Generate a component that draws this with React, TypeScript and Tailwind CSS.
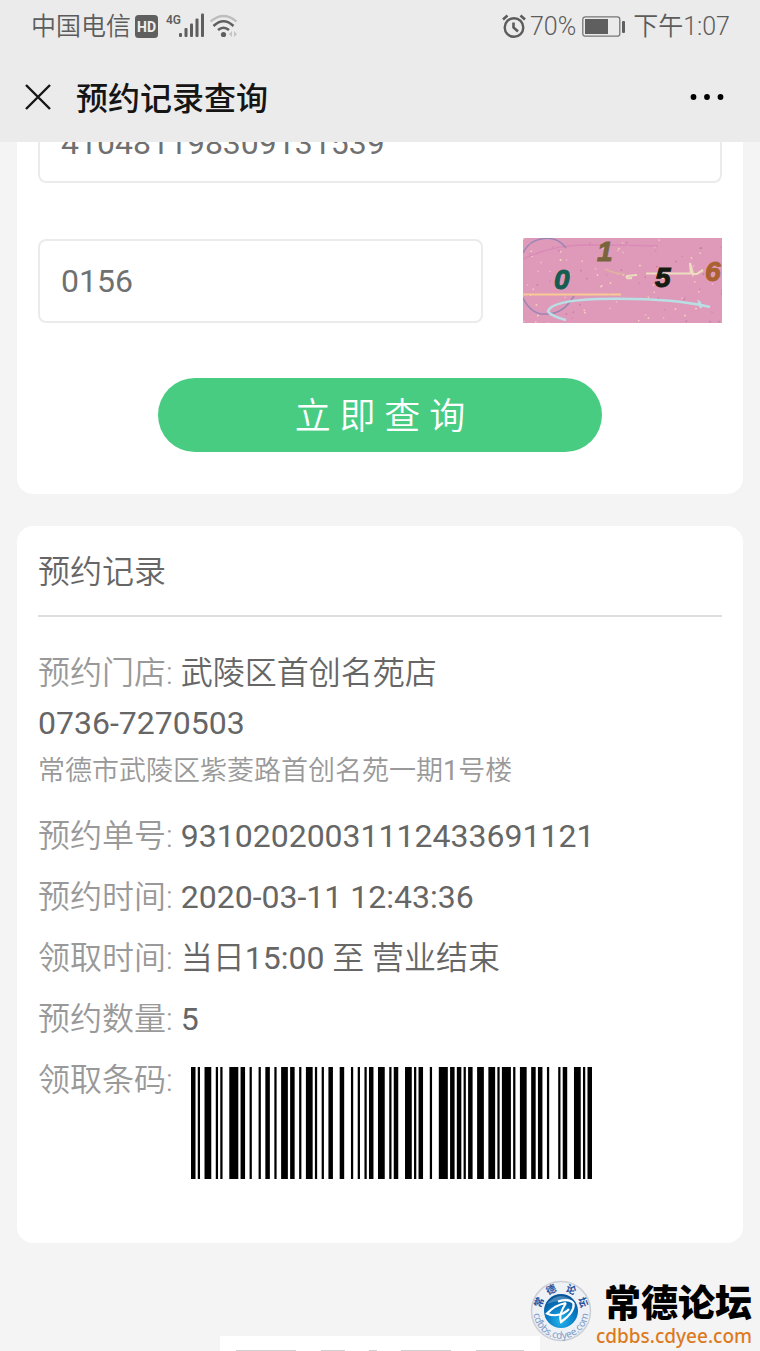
import { useState } from 'react';

const sans = "font-[Roboto,'Noto_Sans_CJK_SC',sans-serif]";

/* Code 128 element widths: start C, 93 10 20 20 03 11 12 43 36 91 12, code A, "1", check, stop */
const BARCODE = [
  '211232', '111341', '221312', '221231', '221231', '121223', '231212', '112232', '112331',
  '112313', '412121', '112232', '311141', '123221', '221411', '2331112',
].join('');

function Barcode({ label }: { label: string }) {
  let x = 0;
  const bars: { x: number; w: number }[] = [];
  BARCODE.split('').forEach((c, i) => {
    const w = Number(c);
    if (i % 2 === 0) bars.push({ x, w });
    x += w;
  });
  return (
    <svg role="img" aria-label={label} viewBox={`0 0 ${x} 50`} preserveAspectRatio="none" className="h-28 w-[401px] text-black">
      {bars.map((b) => (
        <rect key={b.x} x={b.x} y="0" width={b.w} height="50" fill="currentColor" />
      ))}
    </svg>
  );
}

function StatusBar() {
  return (
    <div className="flex h-[52px] items-center justify-between pr-[30px] pl-[31px] text-[25px] leading-none font-[350] text-[#5c5c5c]">
      <div className="flex items-center">
        <span>中国电信</span>
        <svg viewBox="0 0 23 23" className="ml-1 size-[23px]">
          <rect width="23" height="23" rx="3.5" fill="#5f5f5f" />
          <text x="11.5" y="16.5" textAnchor="middle" fontFamily="Roboto, sans-serif" fontWeight="700" fontSize="14" fill="#efefef">HD</text>
        </svg>
        <svg viewBox="0 0 40 26" className="ml-2 h-[26px] w-10" fill="#5f5f5f">
          <text x="0" y="11" fontFamily="Roboto, sans-serif" fontWeight="600" fontSize="12">4G</text>
          <rect x="13" y="20" width="3" height="4" rx="1" />
          <rect x="18.500" y="15" width="3" height="9" rx="1" />
          <rect x="24" y="10.500" width="3" height="13.500" rx="1" />
          <rect x="29.500" y="5.500" width="3" height="18.500" rx="1" />
          <rect x="35" y="0.500" width="3" height="23.500" rx="1" />
        </svg>
        <svg viewBox="0 0 28 24" className="ml-1 h-6 w-7" fill="none" strokeWidth="2.600">
          <path d="M0.500 7.500Q13.500-3.500 26.500 7.500" stroke="#bdbdbd" strokeWidth="2.200" />
          <path d="M3.500 12Q13.500 2.500 23.500 12" stroke="#5f5f5f" />
          <path d="M8 16Q13.500 11.500 19 16" stroke="#5f5f5f" />
          <circle cx="13.500" cy="20.500" r="2.600" fill="#5f5f5f" />
          <path d="M22 17v6l-3-3zM24 17v6l3-3z" fill="#c4c4c4" />
        </svg>
      </div>
      <div className="flex items-center">
        <svg viewBox="0 0 24 24" className="size-6" fill="none" stroke="#5c5c5c" strokeWidth="2.400">
          <circle cx="12" cy="13.500" r="9.300" />
          <path d="M11.500 8.500V13.500l4.500 4M1 5.500 5.500 1.500M23 5.500 18.500 1.500" strokeWidth="2.600" />
        </svg>
        <span className="ml-1">70%</span>
        <svg viewBox="0 0 44 21" className="ml-[6px] h-[21px] w-11">
          <rect x="0.800" y="0.800" width="37" height="19.400" rx="2.500" fill="none" stroke="#777" strokeWidth="1.300" />
          <rect x="3" y="3" width="23" height="15" fill="#5f5f5f" />
          <rect x="40" y="5" width="3" height="12" rx="1" fill="#5f5f5f" />
        </svg>
        <span className="ml-[7px]">下午1:07</span>
      </div>
    </div>
  );
}

function TitleBar() {
  return (
    <div className="flex h-[90px] items-center pt-1 pr-9 pl-6 text-[#151515]">
      <button type="button" aria-label="关闭" className="-mt-1">
        <svg viewBox="0 0 28 28" className="size-7" stroke="currentColor" strokeWidth="2.400">
          <path d="M2 2 26 26M26 2 2 26" />
        </svg>
      </button>
      <h1 className="ml-6 grow text-[32px] leading-[48px] font-medium">预约记录查询</h1>
      <button type="button" aria-label="更多" className="-mt-1">
        <svg viewBox="0 0 34 6" className="h-[6px] w-[34px]" fill="#000">
          <circle cx="3.500" cy="3" r="2.900" />
          <circle cx="17" cy="3" r="2.900" />
          <circle cx="30.500" cy="3" r="2.900" />
        </svg>
      </button>
    </div>
  );
}

const SPECKS = Array.from({ length: 120 }, (_, i) => ({
  x: (i * 73.7 + (i * i * 13) % 41) % 199,
  y: (i * 37.3 + (i * i * 7) % 29) % 85,
  c: ['#f3c9c4', '#f7dcb8', '#d08bad', '#c17fa3', '#f4b9cf'][i % 5],
}));

function Captcha() {
  return (
    <svg viewBox="0 0 199 85" className="h-[85px] w-[199px]" role="img" aria-label="验证码" fill="none">
      <rect width="199" height="85" fill="#df9aba" />
      {SPECKS.map((s, i) => (
        <rect key={i} x={s.x} y={s.y} width="1.500" height="1.500" fill={s.c} />
      ))}
      <path d="M0 21Q30 7 60 7T135 8" stroke="#d98ab6" strokeWidth="1.500" />
      <path d="M0 15C8-2 32-5 43 10M0 60C6 72 14 77 24 76C36 76 45 68 51 58" stroke="#9a86b4" strokeWidth="1.500" />
      <path d="M0 56.500H98" stroke="#f8c993" strokeWidth="2" />
      <path d="M43 82C34 80 26 76 25 73C28 66 45 62 75 61C115 60 158 62 187 69M176 63l2 7" stroke="#b9dfe4" strokeWidth="2.600" />
      <path d="M82 31Q92 36 102 36" stroke="#dfb3a0" strokeWidth="1.500" />
      <path d="M114 37L104 38Q102 41 109 40" stroke="#ecdcc0" strokeWidth="2" />
      <path d="M123 35.500H168L167 25L170 36H174L180 32" stroke="#ecdcc0" strokeWidth="2.200" />
      <g fontFamily="'Liberation Sans', sans-serif" fontWeight="700" fontStyle="italic" fontSize="28" strokeWidth="1">
        <text x="31" y="51" fill="#155c51" stroke="#155c51">0</text>
        <text x="74" y="23" fill="#78653d" stroke="#78653d">1</text>
        <text x="132" y="49" fill="#151b10" stroke="#151b10">5</text>
        <text x="182" y="43" fill="#a9622f" stroke="#a9622f">6</text>
      </g>
    </svg>
  );
}

const fieldClass =
  'h-[84px] w-full min-w-0 rounded-lg border-2 border-[#ebebeb] bg-white px-[21px] text-[32px] text-[#707070] outline-none';

function QueryForm() {
  const [id, setId] = useState('410481198309131539');
  const [code, setCode] = useState('0156');
  return (
    <form onSubmit={(e) => e.preventDefault()} className="rounded-2xl bg-white px-[21px] pt-[17px] pb-[42px]">
      <input aria-label="证件号码" value={id} onChange={(e) => setId(e.target.value)} className={`${fieldClass} pt-1`} />
      <div className="mt-[55px] flex items-center gap-10">
        <input aria-label="验证码" value={code} onChange={(e) => setCode(e.target.value)} className={fieldClass} />
        <div className="shrink-0"><Captcha /></div>
      </div>
      <button type="submit" className="mx-auto mt-[55px] block h-[74px] w-[65%] rounded-full bg-[#48cc82] pt-1 text-[36px] font-[350] text-white">
        立 即 查 询
      </button>
    </form>
  );
}

function Row({ label, children }: { label: string; children: React.ReactNode }) {
  return (
    <div className="flex gap-2 leading-[45px]">
      <dt className="shrink-0 text-[#999]">{label}:</dt>
      <dd>{children}</dd>
    </div>
  );
}

function Digits({ children }: { children: React.ReactNode }) {
  return <span className="font-normal">{children}</span>;
}

function RecordCard() {
  return (
    <section className="mt-8 rounded-2xl bg-white px-[21px] pb-16 text-[#666]">
      <h2 className="border-b-2 border-[#dedede] pt-[23px] pb-[19px] text-[32px] leading-[47px] font-[350]">预约记录</h2>
      <dl className="flex flex-col gap-4 pt-[34px] text-[32px] font-[350]">
        <div>
          <Row label="预约门店">武陵区首创名苑店</Row>
          <dd className="leading-[55px]"><Digits>0736-7270503</Digits></dd>
          <dd className="pb-[6px] text-[27px] leading-[41px] text-[#999]">常德市武陵区紫菱路首创名苑一期<Digits>1</Digits>号楼</dd>
        </div>
        <Row label="预约单号"><Digits>93102020031112433691121</Digits></Row>
        <Row label="预约时间"><Digits>2020-03-11 12:43:36</Digits></Row>
        <Row label="领取时间">当日<Digits>15:00</Digits> 至 营业结束</Row>
        <Row label="预约数量"><Digits>5</Digits></Row>
        <Row label="领取条码">
          <div className="pt-[9px] pl-[10px]"><Barcode label="93102020031112433691121" /></div>
        </Row>
      </dl>
    </section>
  );
}

const SEAL = [
  { char: '常', at: '12%' },
  { char: '德', at: '36%' },
  { char: '论', at: '64%' },
  { char: '坛', at: '88%' },
];

function Watermark() {
  return (
    <div className="absolute right-2 bottom-[5px] flex items-start gap-1">
      <svg viewBox="0 0 62 62" className="size-[62px]">
        <defs>
          <radialGradient id="ball" cx="50%" cy="80%" r="75%">
            <stop offset="0" stopColor="#25b5ee" />
            <stop offset="0.550" stopColor="#087cc4" />
            <stop offset="1" stopColor="#07569b" />
          </radialGradient>
          <path id="arcTop" d="M11 31A20 20 0 0 1 51 31" />
          <path id="arcBottom" d="M4 26A27.500 27.500 0 1 0 58 26" />
        </defs>
        <circle cx="31" cy="31" r="29.500" fill="#eef1f5" stroke="#ccd0d6" strokeWidth="1.500" />
        <circle cx="31" cy="31" r="17" fill="url(#ball)" />
        <path d="M17 24Q31 8 45 24Q31 18 17 24Z" fill="#fff" opacity="0.250" />
        <path d="M28 21.500Q40 18 43.500 23.500Q45 32 31 42Q28 35 36 23M36 23Q25 25 17 33.500Q24 37 33 33.500Q37 31.500 39 29" fill="none" stroke="#fff" strokeWidth="2.200" />
        <g fontFamily="'Noto Sans CJK SC', sans-serif" fontWeight="700" fontSize="10" fill="#1f4f9c" textAnchor="middle">
          {SEAL.map((s) => (
            <text key={s.char}>
              <textPath href="#arcTop" startOffset={s.at}>{s.char}</textPath>
            </text>
          ))}
        </g>
        <text fontFamily="'Noto Sans', sans-serif" fontSize="10" fill="#7d9cc9" textAnchor="middle">
          <textPath href="#arcBottom" startOffset="50%">cdbbs.cdyee.com</textPath>
        </text>
      </svg>
      <div>
        <div className="-mt-1 text-right font-['Noto_Sans_CJK_SC',sans-serif] text-[37px] leading-[50px] font-black text-black">常德论坛</div>
        <div className="font-['Noto_Sans',sans-serif] text-[19px] leading-5 font-medium text-[#dc7b1e]">cdbbs.cdyee.com</div>
      </div>
    </div>
  );
}

export default function App() {
  return (
    <div className={`relative min-h-screen overflow-hidden bg-[#f4f4f4] ${sans}`}>
      <header className="relative z-10 bg-[#ebebeb]">
        <StatusBar />
        <TitleBar />
      </header>
      <main className="-mt-[60px] px-[17px]">
        <QueryForm />
        <RecordCard />
      </main>
      <div className="mx-auto mt-[93px] flex h-[15px] w-[42%] items-end justify-between bg-white px-4">
        <span className="h-px w-[60px] bg-[#d0d0d0]" />
        <span className="h-px w-6 bg-[#d0d0d0]" />
        <span className="h-px w-2 bg-[#d0d0d0]" />
        <span className="h-px w-[50px] bg-[#d0d0d0]" />
        <span className="h-px w-12 bg-[#d0d0d0]" />
      </div>
      <Watermark />
    </div>
  );
}
